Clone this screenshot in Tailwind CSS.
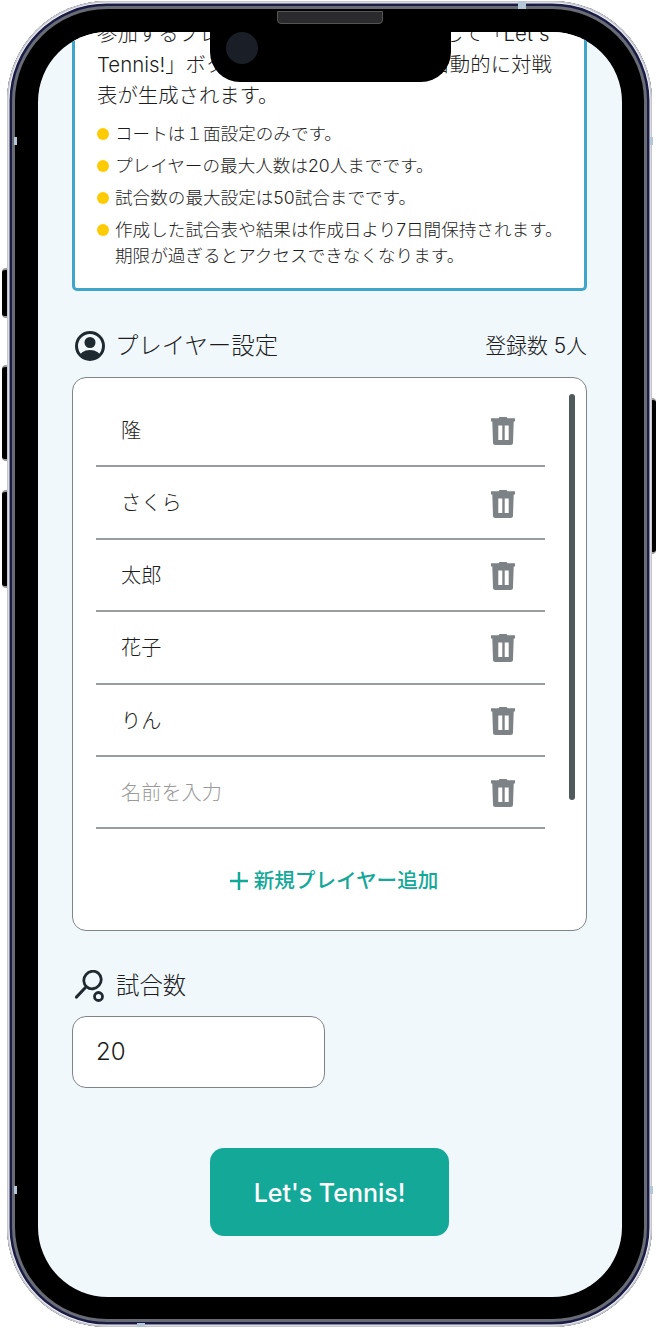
<!DOCTYPE html>
<html lang="ja">
<head>
  <meta charset="UTF-8" />
  <meta name="viewport" content="width=device-width,initial-scale=1.0" />
  <title>Let's Tennis!</title>
  <script src="https://cdn.jsdelivr.net/npm/@tailwindcss/browser@4"></script>
</head>
<body class="bg-white font-['Inter','Noto_Sans_CJK_JP',sans-serif] text-[#1c1c1c]">
  <div class="relative h-[1328px] w-[657px] overflow-hidden pt-px pl-[7px]">
    <!-- side buttons -->
    <div class="absolute left-[2px] top-[268px] h-[50px] w-[5px] rounded-l-sm border-y-2 border-[#999] bg-black"></div>
    <div class="absolute left-[2px] top-[365px] h-[96px] w-[5px] rounded-l-sm border-y-2 border-[#999] bg-black"></div>
    <div class="absolute left-[2px] top-[490px] h-[98px] w-[5px] rounded-l-sm border-y-2 border-[#999] bg-black"></div>
    <div class="absolute left-[652px] top-[398px] h-[156px] w-[4px] rounded-r-sm border-y-2 border-[#999] bg-black"></div>

    <!-- phone frame -->
    <div class="relative h-[1326px] w-[645px] rounded-[100px] bg-black pt-[31px] pl-[31px] shadow-[inset_0_0_0_1.5px_#c4c7cf,inset_0_0_0_2.5px_#f4f4f6,inset_0_0_0_5px_#1b1b46,inset_0_0_0_8px_#686c74]">
      <div class="absolute left-[7px] top-[136px] h-[8px] w-[3px] bg-[#b4c6d8]"></div>
      <div class="absolute right-[-1px] top-[136px] h-[8px] w-[3px] bg-[#b4c6d8]"></div>
      <div class="absolute left-[7px] top-[1185px] h-[8px] w-[3px] bg-[#b4c6d8]"></div>
      <div class="absolute right-[-1px] top-[1185px] h-[8px] w-[3px] bg-[#b4c6d8]"></div>
      <div class="absolute left-[130px] bottom-0 h-[4px] w-[8px] bg-[#b4c6d8]"></div>
      <div class="absolute left-[511px] top-0 h-[8px] w-[8px] bg-[#b4c6d8]"></div>

      <!-- speaker -->
      <div class="absolute left-[270px] top-[10px] h-[13px] w-[106px] rounded-b-[4px] border border-[#555] bg-[#2b2b2d]"></div>
      <!-- notch -->
      <div class="absolute left-[203px] top-[31px] z-10 h-[50px] w-[241px] rounded-b-[30px] bg-black">
        <div class="ml-[16px] h-[32px] w-[32px] rounded-full bg-[#1a1e26]"></div>
      </div>

      <!-- screen -->
      <div class="h-[1265px] w-[584px] overflow-hidden rounded-[70px] bg-[#f0f8fc] pl-[34px] pr-[35px]">
        <!-- info card -->
        <div class="-mt-[20px] h-[279px] rounded-[5px] border-[3px] border-[#3fa5c9] bg-white px-[22px] pt-[3px] font-light">
          <p class="whitespace-nowrap text-[20.4px] leading-[31px]">参加するプレイヤーの名前を全て入力して「Let's<br>Tennis!」ボタンをクリックすると、自動的に対戦<br>表が生成されます。</p>
          <ul class="mt-[10px] whitespace-nowrap text-[17.6px] leading-[25.5px]">
            <li class="flex h-[32px] gap-[6px]"><span class="mt-[7px] h-[12px] w-[12px] shrink-0 rounded-full bg-[#ffcb05]"></span>コートは１面設定のみです。</li>
            <li class="flex h-[32px] gap-[6px]"><span class="mt-[7px] h-[12px] w-[12px] shrink-0 rounded-full bg-[#ffcb05]"></span>プレイヤーの最大人数は20人までです。</li>
            <li class="flex h-[32px] gap-[6px]"><span class="mt-[7px] h-[12px] w-[12px] shrink-0 rounded-full bg-[#ffcb05]"></span>試合数の最大設定は50試合までです。</li>
            <li class="flex gap-[6px]"><span class="mt-[7px] h-[12px] w-[12px] shrink-0 rounded-full bg-[#ffcb05]"></span><span>作成した試合表や結果は作成日より7日間保持されます。<br>期限が過ぎるとアクセスできなくなります。</span></li>
          </ul>
        </div>

        <!-- player header -->
        <div class="mt-[36px] flex h-[38px] items-center justify-between font-light">
          <div class="flex items-center gap-[9px] text-[23.4px]">
            <svg class="ml-[2px] h-[32px] w-[32px]" viewBox="0 0 32 32">
              <defs><clipPath id="c"><circle cx="16" cy="16" r="13.5"/></clipPath></defs>
              <circle cx="16" cy="16" r="13.5" fill="none" stroke="#1f2a30" stroke-width="3"/>
              <circle cx="16" cy="12.5" r="5.5" fill="#1f2a30"/>
              <ellipse cx="16" cy="28" rx="11" ry="8" fill="#1f2a30" clip-path="url(#c)"/>
            </svg>
            <span>プレイヤー設定</span>
          </div>
          <span class="text-[20.9px]">登録数 5人</span>
        </div>

        <!-- player list -->
        <div class="relative mt-[12px] h-[554px] rounded-[14px] border border-[#7f8487] bg-white pl-[23px] pr-[41px] pt-[17px] font-light">
          <div class="absolute right-[11px] top-[16px] h-[406px] w-[6px] rounded-full bg-[#50595c]"></div>

          <div class="flex h-[72.4px] items-center justify-between border-b-2 border-[#999da0] pl-[25px] pr-[30px] text-[20.2px]">
            <span class="pt-[2px]">隆</span>
            <svg class="mt-[2px] h-[28px] w-[24px]" viewBox="0 0 24 28"><path fill="#7c8285" fill-rule="evenodd" d="M8.500 0h7l1 1.200H24V4.500H0V1.200h7.500zM1.300 4.500h21.400L22 25.500a2.500 2.500 0 0 1-2.500 2.500h-15A2.500 2.500 0 0 1 2 25.500zM7.300 8.500v14.500h4V8.500zm6.400 0v14.500h4V8.500z"/></svg>
          </div>
          <div class="flex h-[72.4px] items-center justify-between border-b-2 border-[#999da0] pl-[25px] pr-[30px] text-[20.2px]">
            <span class="pt-[2px]">さくら</span>
            <svg class="mt-[2px] h-[28px] w-[24px]" viewBox="0 0 24 28"><path fill="#7c8285" fill-rule="evenodd" d="M8.500 0h7l1 1.200H24V4.500H0V1.200h7.500zM1.300 4.500h21.400L22 25.500a2.500 2.500 0 0 1-2.500 2.500h-15A2.500 2.500 0 0 1 2 25.500zM7.300 8.500v14.500h4V8.500zm6.400 0v14.500h4V8.500z"/></svg>
          </div>
          <div class="flex h-[72.4px] items-center justify-between border-b-2 border-[#999da0] pl-[25px] pr-[30px] text-[20.2px]">
            <span class="pt-[2px]">太郎</span>
            <svg class="mt-[2px] h-[28px] w-[24px]" viewBox="0 0 24 28"><path fill="#7c8285" fill-rule="evenodd" d="M8.500 0h7l1 1.200H24V4.500H0V1.200h7.500zM1.300 4.500h21.400L22 25.500a2.500 2.500 0 0 1-2.500 2.500h-15A2.500 2.500 0 0 1 2 25.500zM7.300 8.500v14.500h4V8.500zm6.400 0v14.500h4V8.500z"/></svg>
          </div>
          <div class="flex h-[72.4px] items-center justify-between border-b-2 border-[#999da0] pl-[25px] pr-[30px] text-[20.2px]">
            <span class="pt-[2px]">花子</span>
            <svg class="mt-[2px] h-[28px] w-[24px]" viewBox="0 0 24 28"><path fill="#7c8285" fill-rule="evenodd" d="M8.500 0h7l1 1.200H24V4.500H0V1.200h7.500zM1.300 4.500h21.400L22 25.500a2.500 2.500 0 0 1-2.500 2.500h-15A2.500 2.500 0 0 1 2 25.500zM7.300 8.500v14.500h4V8.500zm6.400 0v14.500h4V8.500z"/></svg>
          </div>
          <div class="flex h-[72.4px] items-center justify-between border-b-2 border-[#999da0] pl-[25px] pr-[30px] text-[20.2px]">
            <span class="pt-[2px]">りん</span>
            <svg class="mt-[2px] h-[28px] w-[24px]" viewBox="0 0 24 28"><path fill="#7c8285" fill-rule="evenodd" d="M8.500 0h7l1 1.200H24V4.500H0V1.200h7.500zM1.300 4.500h21.400L22 25.500a2.500 2.500 0 0 1-2.500 2.500h-15A2.500 2.500 0 0 1 2 25.500zM7.300 8.500v14.500h4V8.500zm6.400 0v14.500h4V8.500z"/></svg>
          </div>
          <div class="flex h-[72.4px] items-center justify-between border-b-2 border-[#999da0] pl-[25px] pr-[30px] text-[20.2px]">
            <span class="pt-[2px] text-[#999]">名前を入力</span>
            <svg class="mt-[2px] h-[28px] w-[24px]" viewBox="0 0 24 28"><path fill="#7c8285" fill-rule="evenodd" d="M8.500 0h7l1 1.200H24V4.500H0V1.200h7.500zM1.300 4.500h21.400L22 25.500a2.500 2.500 0 0 1-2.500 2.500h-15A2.500 2.500 0 0 1 2 25.500zM7.300 8.500v14.500h4V8.500zm6.400 0v14.500h4V8.500z"/></svg>
          </div>

          <div class="mr-[-41px] ml-[-14px] mt-[35px] flex items-center justify-center gap-[6px] text-[20.6px] font-medium leading-[34px] text-[#14a899]">
            <svg class="h-[18px] w-[18px]" viewBox="0 0 18 18"><path d="M9 0v18M0 9h18" stroke="#14a899" stroke-width="2.5"/></svg>
            <span>新規プレイヤー追加</span>
          </div>
        </div>

        <!-- match count -->
        <div class="mt-[36px] flex h-[38px] items-center gap-[10px] text-[23.4px] font-light">
          <svg class="ml-[2px] h-[32px] w-[32px]" viewBox="0 0 32 32" fill="none" stroke="#1f2a30">
            <ellipse cx="18.5" cy="10" rx="8.5" ry="9" transform="rotate(40 18.5 10)" stroke-width="2.8"/>
            <path d="M11 18 2.500 27" stroke-width="3.2" stroke-linecap="round"/>
            <circle cx="24.5" cy="26.5" r="4" stroke-width="2.8"/>
          </svg>
          <span>試合数</span>
        </div>
        <div class="mt-[11px] flex h-[72px] w-[253px] items-center rounded-[14px] border border-[#7f8487] bg-white pl-[23px] text-[24px] font-light">20</div>

        <button class="mx-auto mt-[60px] block h-[88px] w-[239px] rounded-[14px] bg-[#14a899] pt-[3px] text-[25px] font-medium text-white">Let's Tennis!</button>
      </div>
    </div>
  </div>
</body>
</html>
